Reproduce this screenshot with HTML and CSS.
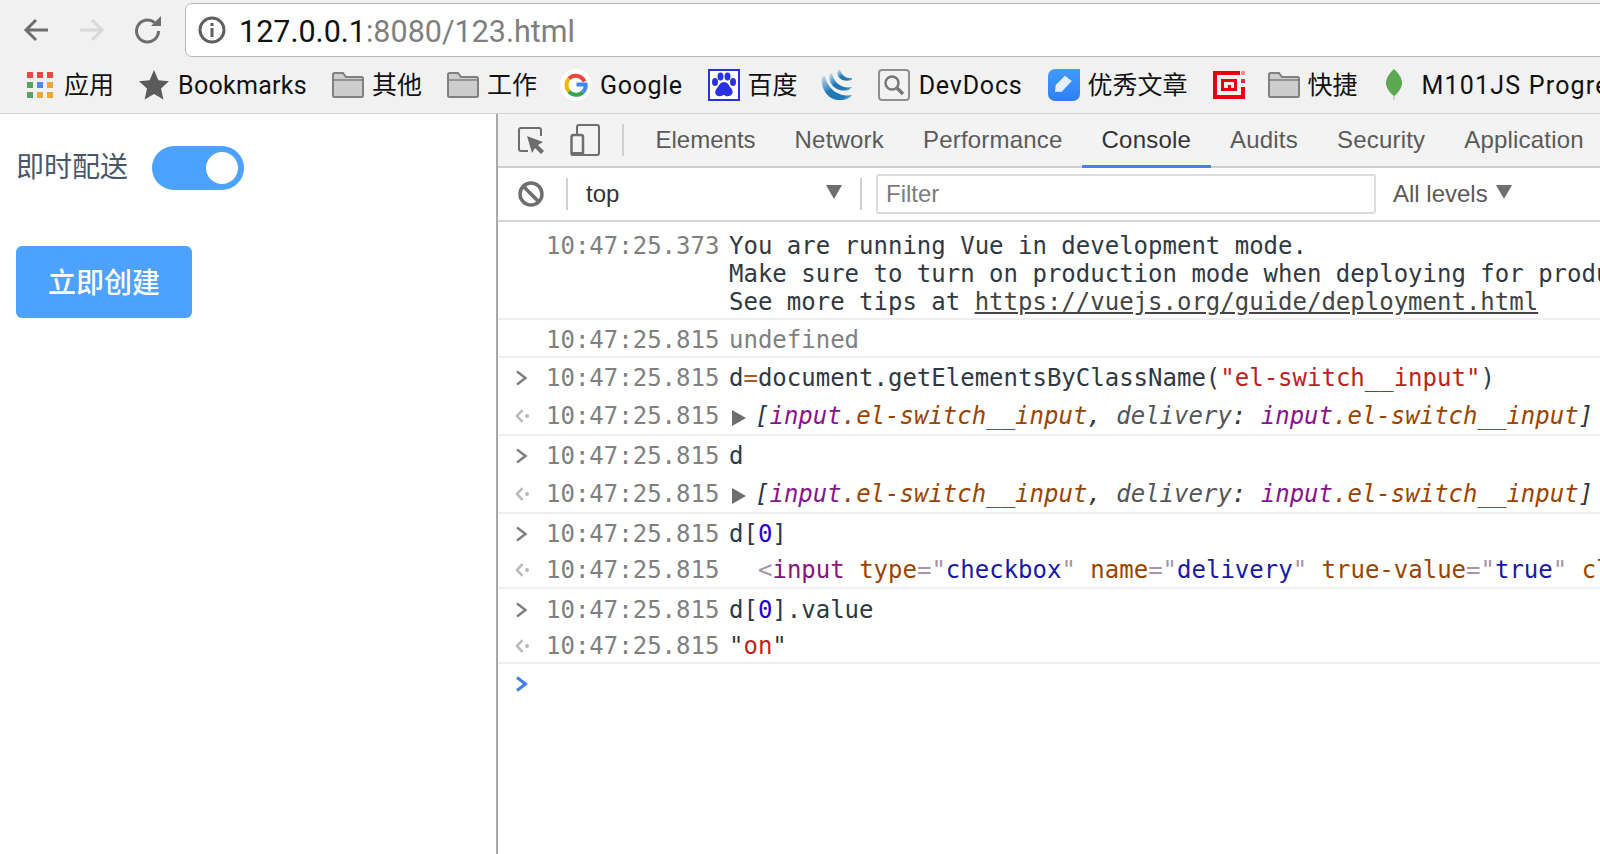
FILE: index.html
```html
<!DOCTYPE html>
<html lang="zh">
<head>
<meta charset="utf-8">
<title>127.0.0.1:8080/123.html</title>
<link rel="stylesheet" href="styles.css">
</head>
<body>
<header class="chrome">
  <div class="navbar">
    <svg class="nav-icon back" viewBox="0 0 28 28"><path d="M26 14H4M14 4L4 14l10 10" fill="none" stroke="#6e6e6e" stroke-width="3"/></svg>
    <svg class="nav-icon fwd" viewBox="0 0 28 28"><path d="M2 14h22M14 4l10 10-10 10" fill="none" stroke="#d8d8d8" stroke-width="3"/></svg>
    <svg class="nav-icon reload" viewBox="0 0 28 28"><path d="M20.500 6.500A11 11 0 1 0 24.500 15" fill="none" stroke="#6e6e6e" stroke-width="3"/><path d="M27 0V10H17z" fill="#6e6e6e"/></svg>
    <div class="omnibox">
      <svg class="info" viewBox="0 0 28 28"><circle cx="14" cy="14" r="12" fill="none" stroke="#5f5f5f" stroke-width="3"/><rect x="12.500" y="12" width="3" height="9" fill="#5f5f5f"/><rect x="12.500" y="7" width="3" height="3" fill="#5f5f5f"/></svg>
      <span class="url"><span class="host">127.0.0.1</span>:8080/123.html</span>
    </div>
  </div>
  <nav class="bookmarks">
    <a class="bm apps">
      <svg class="ico-apps" viewBox="0 0 26 26">
        <rect x="0" y="0" width="6" height="6" fill="#e34c3f"/><rect x="10" y="0" width="6" height="6" fill="#e34c3f"/><rect x="20" y="0" width="6" height="6" fill="#e34c3f"/>
        <rect x="0" y="10" width="6" height="6" fill="#5ca161"/><rect x="10" y="10" width="6" height="6" fill="#4a8bf0"/><rect x="20" y="10" width="6" height="6" fill="#eba83a"/>
        <rect x="0" y="20" width="6" height="6" fill="#5ca161"/><rect x="10" y="20" width="6" height="6" fill="#eba83a"/><rect x="20" y="20" width="6" height="6" fill="#eba83a"/>
      </svg>
      <span class="cjk">应用</span>
    </a>
    <a class="bm">
      <svg class="ico-star" viewBox="0 0 30 30"><path d="M15 0l4.400 10.200 10.600 1-8 7.200 2.400 11.200L15 24l-9.400 5.600L8 18.400l-8-7.200 10.600-1z" fill="#5b5b5b"/></svg>
      <span>Bookmarks</span>
    </a>
    <a class="bm tight">
      <svg class="ico-folder" viewBox="0 0 32 26"><path d="M1 24V2.500Q1 1 2.500 1H11l3 4h15.500Q31 5 31 6.500V24q0 1-1.500 1h-27Q1 25 1 24z" fill="#cdcdcd" stroke="#808080" stroke-width="2"/><path d="M1 8h30" stroke="#808080" stroke-width="1.500"/></svg>
      <span class="cjk">其他</span>
    </a>
    <a class="bm tight">
      <svg class="ico-folder" viewBox="0 0 32 26"><path d="M1 24V2.500Q1 1 2.500 1H11l3 4h15.500Q31 5 31 6.500V24q0 1-1.500 1h-27Q1 25 1 24z" fill="#cdcdcd" stroke="#808080" stroke-width="2"/><path d="M1 8h30" stroke="#808080" stroke-width="1.500"/></svg>
      <span class="cjk">工作</span>
    </a>
    <a class="bm tight goog">
      <svg class="ico-g" viewBox="0 0 32 32">
        <circle cx="16" cy="16" r="16" fill="#fff"/>
        <path d="M24.500 12.500A9.600 9.600 0 0 0 9 9.500" fill="none" stroke="#e8483a" stroke-width="4"/>
        <path d="M9 9.500a9.600 9.600 0 0 0 0 13" fill="none" stroke="#f4b400" stroke-width="4"/>
        <path d="M9 22.500a9.600 9.600 0 0 0 14 .5" fill="none" stroke="#34a853" stroke-width="4"/>
        <path d="M23 23a9 9 0 0 0 2.600-7.500H16.500" fill="none" stroke="#4285f4" stroke-width="4"/>
      </svg>
      <span>Google</span>
    </a>
    <a class="bm tight">
      <svg class="ico-32" viewBox="0 0 32 32">
        <rect x="1" y="1" width="30" height="30" fill="#fff" stroke="#2932e1" stroke-width="2"/>
        <ellipse cx="7" cy="13" rx="3" ry="4" fill="#2932e1"/><ellipse cx="12.500" cy="7.500" rx="3" ry="4" fill="#2932e1"/><ellipse cx="19.500" cy="7.500" rx="3" ry="4" fill="#2932e1"/><ellipse cx="25" cy="13" rx="3" ry="4" fill="#2932e1"/>
        <path d="M16 13c4 0 5 4 7 6s3 7-2 8-3-1-5-1-2 2-6 1-3-6-1-8 3-6 7-6z" fill="#2932e1"/>
      </svg>
      <span class="cjk">百度</span>
    </a>
    <a class="bm jq">
      <svg class="ico-32" viewBox="0 0 32 32">
        <defs><linearGradient id="jqg" x1="0" y1="0" x2="1" y2="1"><stop offset="0" stop-color="#cfe3f1"/><stop offset=".45" stop-color="#1f78b8"/><stop offset=".8" stop-color="#1f78b8"/><stop offset="1" stop-color="#9cc8e4"/></linearGradient></defs>
        <path d="M1 8C-1 20 8 32 20 31c5 0 9-2 11-5C22 28 8 24 4 7z" fill="url(#jqg)"/>
        <path d="M9 5c-3 10 7 19 19 16l3-3c-9 2-18-3-20-14z" fill="url(#jqg)"/>
        <path d="M17 1c-3 7 5 13 14 10v-2c-5 1-10-2-12-8z" fill="url(#jqg)"/>
      </svg>
    </a>
    <a class="bm docs">
      <svg class="ico-32" viewBox="0 0 32 32">
        <rect x="1" y="1" width="30" height="30" rx="3" fill="#f2f2f2" stroke="#8f8f8f" stroke-width="2"/>
        <circle cx="14" cy="14" r="6.500" fill="none" stroke="#777" stroke-width="2.500"/>
        <path d="M19 19l6 6" stroke="#777" stroke-width="3.500"/>
      </svg>
      <span>DevDocs</span>
    </a>
    <a class="bm tight">
      <svg class="ico-32" viewBox="0 0 32 32">
        <defs><linearGradient id="blu" x1="0" y1="0" x2="0" y2="1"><stop offset="0" stop-color="#3f9bfb"/><stop offset="1" stop-color="#2f7ff6"/></linearGradient></defs>
        <path d="M7 0h25v25a7 7 0 0 1-7 7H7a7 7 0 0 1-7-7V7a7 7 0 0 1 7-7z" fill="url(#blu)"/>
        <path d="M17 6.700L23.700 12 13.700 22.700H7L7.700 16z" fill="#e4f0ff"/>
      </svg>
      <span class="cjk">优秀文章</span>
    </a>
    <a class="bm red">
      <svg class="ico-red" viewBox="0 0 32 28">
        <path d="M0 0h27v4H4v20h24v-8h4v12H0z" fill="#e60012"/>
        <path d="M8 8h16v12H8zM11 11v6h4v-3h3v3h3v-6z" fill="#e60012" fill-rule="evenodd"/>
        <rect x="28" y="0" width="4" height="4" fill="#ff8a92"/><rect x="28" y="8" width="4" height="4" fill="#ff2050"/>
      </svg>
    </a>
    <a class="bm tight">
      <svg class="ico-folder" viewBox="0 0 32 26"><path d="M1 24V2.500Q1 1 2.500 1H11l3 4h15.500Q31 5 31 6.500V24q0 1-1.500 1h-27Q1 25 1 24z" fill="#cdcdcd" stroke="#808080" stroke-width="2"/><path d="M1 8h30" stroke="#808080" stroke-width="1.500"/></svg>
      <span class="cjk">快捷</span>
    </a>
    <a class="bm leaf-item">
      <svg class="ico-leaf" viewBox="0 0 16 32"><path d="M7 26h2v5H7z" fill="#d3d3c8"/><path d="M8 0c5 5 8 9 8 14s-4 10-8 13c-4-3-8-8-8-13S3 5 8 0z" fill="#5aa850"/></svg>
      <span class="wide">M101JS Progress</span>
    </a>
  </nav>
</header>
<main class="split">
  <section class="page">
    <div class="form-row">
      <label class="form-label">即时配送</label>
      <span class="switch"><span class="knob"></span></span>
    </div>
    <button class="create">立即创建</button>
  </section>
  <section class="devtools">
    <div class="tabbar">
      <svg class="dt-inspect" viewBox="0 0 28 28"><path d="M10 24H3q-2 0-2-2V3q0-2 2-2h18q2 0 2 2v6" fill="none" stroke="#6e6e6e" stroke-width="2"/><path d="M9 9l16 6-5 3 6 6-3 3-6-6-3 5z" fill="#6e6e6e"/></svg>
      <svg class="dt-device" viewBox="0 0 30 32"><path d="M7 10V3q0-2 2-2h18q2 0 2 2v26q0 2-2 2H12" fill="none" stroke="#6e6e6e" stroke-width="2"/><rect x="1.500" y="11" width="11.500" height="20" rx="2" fill="#f3f3f3" stroke="#6e6e6e" stroke-width="2.500"/><rect x="1" y="28" width="12" height="3.500" fill="#6e6e6e"/></svg>
      <span class="vsep tall"></span>
      <a class="tab first">Elements</a>
      <a class="tab">Network</a>
      <a class="tab">Performance</a>
      <a class="tab active">Console</a>
      <a class="tab">Audits</a>
      <a class="tab">Security</a>
      <a class="tab">Application</a>
    </div>
    <div class="filterbar">
      <svg class="dt-clear" viewBox="0 0 26 26"><circle cx="13" cy="13" r="11" fill="none" stroke="#6e6e6e" stroke-width="3.500"/><path d="M5 5l16 16" stroke="#6e6e6e" stroke-width="3.500"/></svg>
      <span class="vsep"></span>
      <span class="context">top</span>
      <svg class="caret" viewBox="0 0 16 14"><path d="M0 0h16L8 14z" fill="#6e6e6e"/></svg>
      <span class="vsep sep-b"></span>
      <div class="filter">Filter</div>
      <span class="levels">All levels</span>
      <svg class="caret" viewBox="0 0 16 14"><path d="M0 0h16L8 14z" fill="#6e6e6e"/></svg>
    </div>
    <div class="console">
      <div class="group g-first">
        <div class="line"><span class="gutter"></span><span class="ts">10:47:25.373</span><span class="msg">You are running Vue in development mode.</span></div>
        <div class="line"><span class="gutter"></span><span class="ts"></span><span class="msg">Make sure to turn on production mode when deploying for production.</span></div>
        <div class="line"><span class="gutter"></span><span class="ts"></span><span class="msg">See more tips at <u class="link">https://vuejs.org/guide/deployment.html</u></span></div>
      </div>
      <div class="group g-one">
        <div class="line"><span class="gutter"></span><span class="ts">10:47:25.815</span><span class="msg undef">undefined</span></div>
      </div>
      <div class="group g-two">
        <div class="line"><svg class="gutter-i" viewBox="0 0 14 16"><path d="M2 1.500L10.500 8 2 14.500" fill="none" stroke="#808080" stroke-width="2.500"/></svg><span class="ts">10:47:25.815</span><span class="msg">d<span class="op">=</span>document.getElementsByClassName(<span class="str">"el-switch__input"</span>)</span></div>
        <div class="line"><svg class="gutter-i" viewBox="0 0 14 16"><path d="M7.500 2L2 8l5.500 6" fill="none" stroke="#b8b8b8" stroke-width="2.500"/><circle cx="12" cy="8" r="2" fill="#b8b8b8"/></svg><span class="ts">10:47:25.815</span><span class="msg"><svg class="tri" viewBox="0 0 14 16"><path d="M0 0l14 8-14 8z" fill="#6e6e6e"/></svg><i class="obj">[<span class="pur">input</span><span class="brn">.el-switch__input</span>, <span class="gry">delivery</span>: <span class="pur">input</span><span class="brn">.el-switch__input</span>]</i></span></div>
      </div>
      <div class="group g-two">
        <div class="line"><svg class="gutter-i" viewBox="0 0 14 16"><path d="M2 1.500L10.500 8 2 14.500" fill="none" stroke="#808080" stroke-width="2.500"/></svg><span class="ts">10:47:25.815</span><span class="msg">d</span></div>
        <div class="line"><svg class="gutter-i" viewBox="0 0 14 16"><path d="M7.500 2L2 8l5.500 6" fill="none" stroke="#b8b8b8" stroke-width="2.500"/><circle cx="12" cy="8" r="2" fill="#b8b8b8"/></svg><span class="ts">10:47:25.815</span><span class="msg"><svg class="tri" viewBox="0 0 14 16"><path d="M0 0l14 8-14 8z" fill="#6e6e6e"/></svg><i class="obj">[<span class="pur">input</span><span class="brn">.el-switch__input</span>, <span class="gry">delivery</span>: <span class="pur">input</span><span class="brn">.el-switch__input</span>]</i></span></div>
      </div>
      <div class="group g-short">
        <div class="line"><svg class="gutter-i" viewBox="0 0 14 16"><path d="M2 1.500L10.500 8 2 14.500" fill="none" stroke="#808080" stroke-width="2.500"/></svg><span class="ts">10:47:25.815</span><span class="msg">d[<span class="num">0</span>]</span></div>
        <div class="line"><svg class="gutter-i" viewBox="0 0 14 16"><path d="M7.500 2L2 8l5.500 6" fill="none" stroke="#b8b8b8" stroke-width="2.500"/><circle cx="12" cy="8" r="2" fill="#b8b8b8"/></svg><span class="ts">10:47:25.815</span><span class="msg el"><span class="tag">&lt;</span><span class="tname">input</span> <span class="brn">type</span><span class="tag">="</span><span class="val">checkbox</span><span class="tag">"</span> <span class="brn">name</span><span class="tag">="</span><span class="val">delivery</span><span class="tag">"</span> <span class="brn">true-value</span><span class="tag">="</span><span class="val">true</span><span class="tag">"</span> <span class="brn">class</span></span></div>
      </div>
      <div class="group g-last">
        <div class="line"><svg class="gutter-i" viewBox="0 0 14 16"><path d="M2 1.500L10.500 8 2 14.500" fill="none" stroke="#808080" stroke-width="2.500"/></svg><span class="ts">10:47:25.815</span><span class="msg">d[<span class="num">0</span>].value</span></div>
        <div class="line"><svg class="gutter-i" viewBox="0 0 14 16"><path d="M7.500 2L2 8l5.500 6" fill="none" stroke="#b8b8b8" stroke-width="2.500"/><circle cx="12" cy="8" r="2" fill="#b8b8b8"/></svg><span class="ts">10:47:25.815</span><span class="msg">"<span class="str">on</span>"</span></div>
      </div>
      <div class="prompt"><svg class="gutter-i" viewBox="0 0 14 16"><path d="M2 1.500L10.500 8 2 14.500" fill="none" stroke="#3f7fe8" stroke-width="3"/></svg></div>
    </div>
  </section>
</main>
</body>
</html>
```
FILE: styles.css
```css
* { box-sizing: border-box; }
html, body { margin: 0; width: 1600px; height: 854px; overflow: hidden; background: #fff; }
body { font-family: "Liberation Sans", Arial, "Noto Sans CJK SC", sans-serif; }
.cjk { font-family: "Noto Sans CJK SC", sans-serif; }

.chrome { background: #f1f1f1; height: 114px; border-bottom: 1px solid #d4d4d4; }
.navbar { height: 57px; display: flex; align-items: center; padding-top: 3px; overflow: hidden; }
.nav-icon { width: 28px; height: 28px; flex: none; }
.back { margin-left: 22px; }
.fwd { margin-left: 28px; }
.reload { margin-left: 28px; }
.omnibox { margin-left: 23px; flex: 1; height: 54px; margin-right: -10px; background: #fff; border: 1px solid #b9b9b9; border-radius: 7px; display: flex; align-items: center; padding-left: 12px; }
.info { width: 28px; height: 28px; flex: none; }
.url { margin-left: 13px; margin-top: 2px; font-size: 30.500px; color: #7f7f7f; font-family: Roboto, "Liberation Sans", sans-serif; }
.host { color: #111; }

.bookmarks { height: 56px; display: flex; align-items: center; padding-left: 27px; gap: 25px; white-space: nowrap; overflow: hidden; }
.bm { display: flex; align-items: center; gap: 9px; font-size: 25px; color: #111; font-family: Roboto, "Liberation Sans", sans-serif; letter-spacing: .3px; flex: none; }
.bm.apps { gap: 11px; }
.bm.tight { gap: 8px; }
.bm.goog { margin-left: -2px; letter-spacing: .6px; }
.bm.jq { margin-left: -2px; }
.bm.docs { letter-spacing: .8px; }
.bm.red { margin-right: -2px; }
.bm .cjk { font-size: 25px; letter-spacing: 0; font-family: "Noto Sans CJK SC", sans-serif; position: relative; top: -2px; }
.ico-apps { width: 26px; height: 26px; }
.ico-star { width: 30px; height: 30px; }
.ico-folder { width: 32px; height: 26px; }
.ico-g { width: 32px; height: 32px; }
.ico-32 { width: 32px; height: 32px; }
.ico-red { width: 32px; height: 28px; }
.ico-leaf { width: 16px; height: 32px; }
.leaf-item { gap: 20px; margin-left: 3px; }
.wide { letter-spacing: 1.200px; }

.split { display: flex; height: 740px; }
.page { width: 496px; flex: none; padding: 32px 0 0 16px; }
.form-row { display: flex; align-items: center; gap: 24px; height: 44px; }
.form-label { font-size: 28px; color: #48576a; font-family: "Noto Sans CJK SC", sans-serif; position: relative; top: -3px; }
.switch { width: 92px; height: 44px; border-radius: 22px; background: #4da1ff; display: flex; align-items: center; justify-content: flex-end; padding-right: 6px; }
.knob { width: 32px; height: 32px; border-radius: 50%; background: #fff; }
.create { display: block; margin-top: 56px; width: 176px; height: 72px; border: 0; border-radius: 6px; background: #4da1ff; color: #fff; font-size: 28px; font-weight: 500; font-family: "Noto Sans CJK SC", sans-serif; padding: 0 0 2px; }

.devtools { flex: 1; border-left: 2px solid #a9a9a9; min-width: 0; overflow: hidden; }
.tabbar { height: 54px; background: #f3f3f3; border-bottom: 2px solid #cdcdcd; display: flex; align-items: center; padding-left: 20px; }
.dt-inspect { width: 28px; height: 28px; flex: none; margin-top: 1px; }
.dt-device { width: 30px; height: 32px; flex: none; margin-left: 24px; }
.vsep { width: 2px; height: 32px; background: #d0d0d0; flex: none; }
.vsep.tall { margin-left: 22px; margin-right: 12px; }
.tab { height: 54px; padding: 0 19.500px; font-size: 24px; letter-spacing: .2px; color: #5a5a5a; display: flex; align-items: center; flex: none; }
.tab.first { letter-spacing: 0; }
.tab.active { color: #333; padding-top: 2px; border-bottom: 3px solid #4a80e8; margin-bottom: -1px; }

.filterbar { height: 54px; background: #fff; border-bottom: 2px solid #d4d4d4; display: flex; align-items: center; padding-left: 20px; font-size: 24px; color: #5a5a5a; }
.dt-clear { width: 26px; height: 26px; flex: none; margin-right: 22px; }
.context { margin-left: 18px; color: #333; width: 240px; }
.caret { width: 16px; height: 14px; flex: none; margin-top: -4px; }
.sep-b { margin-left: 18px; }
.filter { margin-left: 14px; width: 500px; height: 40px; border: 2px solid #dcdcdc; border-radius: 3px; padding-left: 8px; line-height: 36px; color: #7d7d7d; flex: none; }
.levels { margin-left: 17px; margin-right: 8px; }

.console { font-family: "DejaVu Sans Mono", monospace; font-size: 24px; color: #303942; }
.group { border-bottom: 2px solid #efefef; }
.line { display: flex; height: 28px; line-height: 28px; white-space: nowrap; align-items: center; }
.g-first { padding: 10px 0 2px; }
.g-one { padding: 6px 0 2px; }
.g-two { padding: 6px 0 4px; display: flex; flex-direction: column; gap: 10px; }
.g-short { padding: 6px 0 3px; display: flex; flex-direction: column; gap: 8px; }
.g-last { padding: 7px 0 2px; display: flex; flex-direction: column; gap: 8px; }
.gutter { width: 48px; flex: none; }
.gutter-i { width: 14px; height: 16px; flex: none; margin: 0 17px; }
.ts { width: 183px; flex: none; color: #808080; }
.msg { flex: none; white-space: pre; }
.undef { color: #808080; }
.link { color: #444; }
.op { color: #a9591d; }
.str { color: #bd2220; }
.num { color: #1c00cf; }
.tri { width: 14px; height: 16px; margin: 0 9px 0 3px; vertical-align: -2px; }
.obj { color: #303942; }
.pur { color: #881391; }
.brn { color: #994500; }
.gry { color: #565656; }
.el { padding-left: 29px; }
.tag { color: #a894a6; }
.tname { color: #881280; }
.val { color: #1a1aa6; }
.prompt { height: 40px; display: flex; align-items: center; }
```
